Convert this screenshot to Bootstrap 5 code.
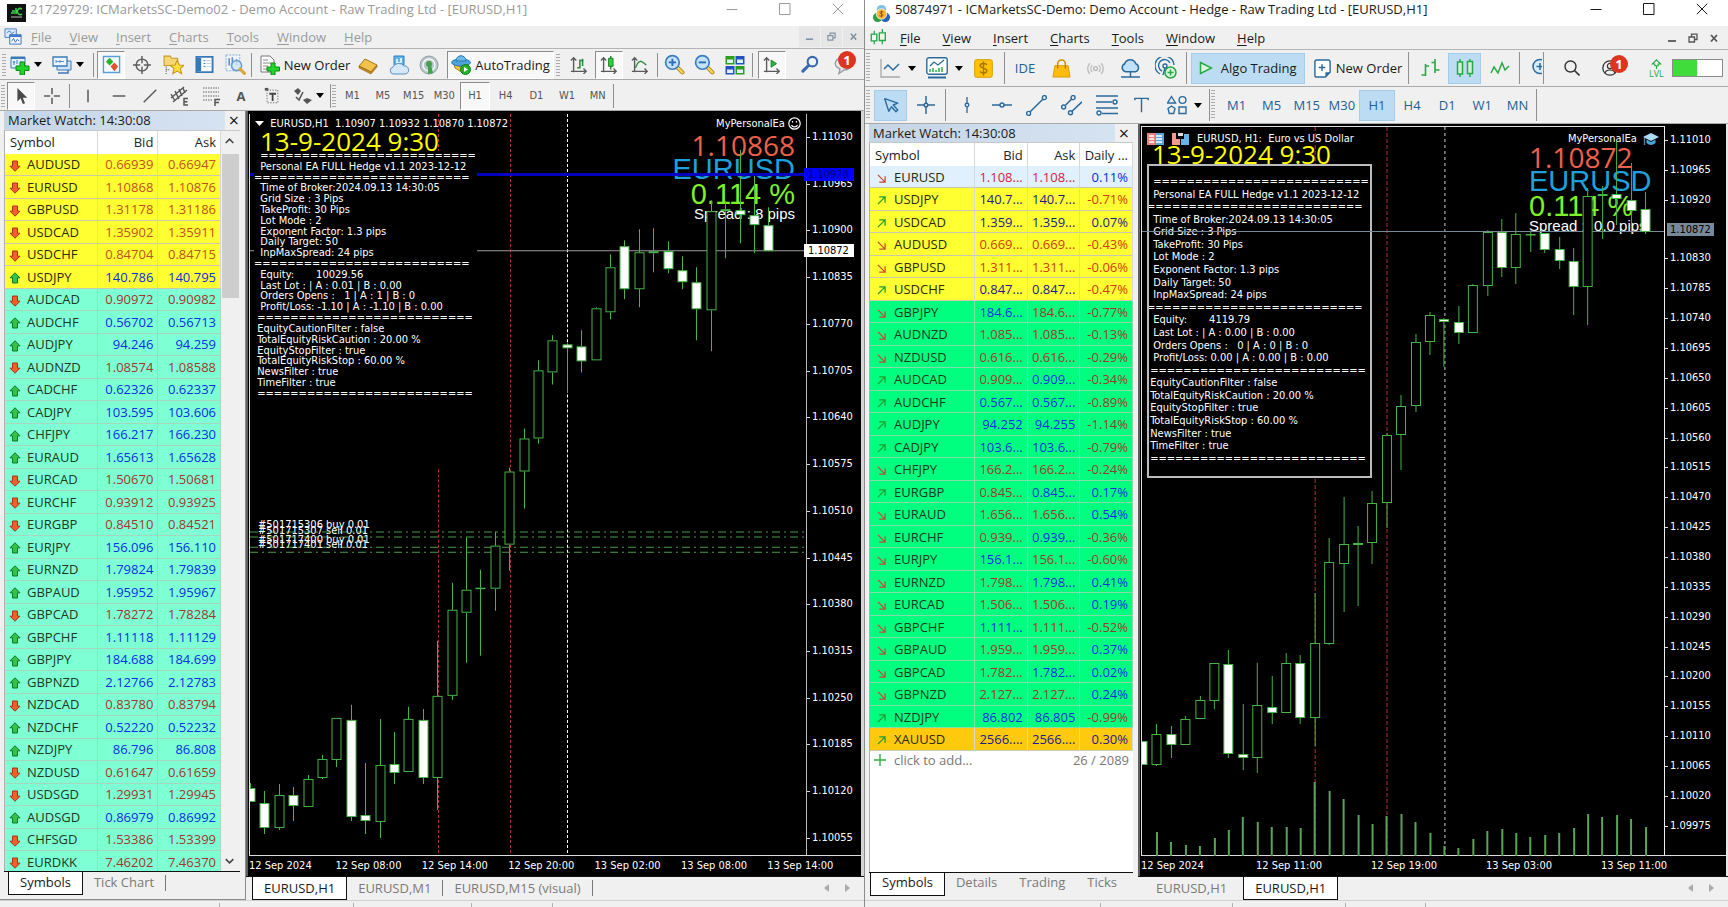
<!DOCTYPE html>
<html lang="en">
<head>
<meta charset="utf-8">
<meta name="viewport" content="width=device-width, initial-scale=1">
<title>EURUSD,H1 - Trading terminals</title>
<link href="https://cdn.jsdelivr.net/npm/bootstrap@5.3.0/dist/css/bootstrap.min.css" rel="stylesheet">
<style>
  :root { --face:#f0f0f0; --edge:#a9a9a9; --ui:"Open Sans","Noto Sans",sans-serif; --chart:"DejaVu Sans Condensed","DejaVu Sans","Noto Sans",sans-serif; }
  html, body { height:100%; }
  body { font-family:var(--ui); font-size:13px; line-height:18px; color:#1a1a1a; background:var(--face); overflow:hidden; }
  .terminal { width:50%; min-width:0; background:var(--face); }
  .terminal.t5 { border-left:1px solid #8c8c8c; }
  .btn { --bs-btn-padding-x:0; --bs-btn-padding-y:0; --bs-btn-font-size:13px; --bs-btn-line-height:18px; --bs-btn-border-radius:0; font-family:var(--ui); color:inherit; }
  svg { display:block; flex:none; }

  /* caption and menu */
  .caption-bar { height:26px; background:#fff; padding-left:7px; }
  .caption-bar .title { line-height:18px; }
  .caption-bar .wbtn { width:53px; height:26px; padding-bottom:8px; }
  .menu-bar { height:23px; border-bottom:1px solid #b4b4b4; }
  .menu-bar a { color:inherit; text-decoration:none; }
  .mdi button { width:21px; height:21px; }
  .t4 .caption-bar, .t4 .menu-bar { color:#9a9a9a; }
  .t4 .menu-bar { padding-left:4px; }
  .t4 .menu-links { gap:18px; margin-left:8px; }
  .t4 .mdi { gap:1px; color:#8494a4; }
  .t4 .mdi button { background:#e6e6e6; }
  .t5 .menu-bar { height:24px; padding-left:5px; }
  .t5 .menu-links { gap:22px; margin-left:13px; }
  .t5 .mdi { color:#555; padding-right:4px; }
  .u { text-decoration:underline; text-underline-offset:2px; }

  /* toolbars */
  .tbar { border-bottom:1px solid var(--edge); }
  .grip { width:4px; align-self:stretch; margin:3px 0; background:repeating-linear-gradient(#999 0 1px, transparent 1px 3px); opacity:.8; }
  .vsep { width:1px; align-self:stretch; margin:2px 0; background:#8f8f8f; }
  .caret { width:0; height:0; border:4px solid transparent; border-top:5px solid #000; border-bottom:0; }
  .t4 .tbar { height:31px; padding-top:2px; }
  .t4 .tool { width:28px; height:28px; }
  .t4 .tool.on, .t4 .wide.on { background:#f8f8f8; border:1px solid; border-color:#8c8c8c #fff #fff #8c8c8c; }
  .t4 .frames { width:276px; font:11px/14px var(--chart); color:#555; }
  .t4 .frames .btn { font:inherit; height:28px; border:1px solid transparent; }
  .t4 .frames .btn.on { background:#f8f8f8; border-color:#8c8c8c #fff #fff #8c8c8c; }
  .t5 .tbar { height:37px; }
  .t5 .tool { width:33px; height:31px; }
  .t5 .on { background:#bcdcf4; border:1px solid #a4cdec; }
  .t5 .frames { width:316px; color:#1c5f94; }
  .t5 .frames .btn { height:31px; }
  .t5 .frames .btn.on { background:#bcdcf4; }
  .clip { width:13px; overflow:hidden; }
  .alert-dot { position:absolute; width:18px; height:18px; border-radius:50%; background:#dc3520; color:#fff; font-weight:700; font-size:13px; line-height:18px; text-align:center; }

  /* market watch */
  .watch { padding:0 5px 0 4px; }
  .t4 .watch { width:246px; border-right:1px solid #8c8c8c; border-bottom:1px solid #8c8c8c; }
  .t5 .watch { width:273px; }
  .watch-head { height:19px; }
  .t5 .watch-head { height:18px; }
  .watch-head .name { background:linear-gradient(90deg,#c5d5e6,#d6e3f1); padding-left:4px; }
  .t4 .watch { padding-right:2px; }
  .t4 .watch-body, .t4 .watch .tabs-row { margin-right:3px; }
  .watch-head .close-x { width:18px; font-size:18px; line-height:16px; }
  .watch-body { background:#fff; border-left:1px solid #b0b0b0; border-top:1px solid #c8c8c8; min-height:0; }
  .quotes { --bs-table-bg:transparent; table-layout:fixed; margin:0; font-size:13px; line-height:18px; border-collapse:separate; border-spacing:0; }
  .quotes th, .quotes td { padding:0 4px 0 0; border:0; border-right:1px solid #d8d8d8; white-space:nowrap; overflow:hidden; text-align:right; font-weight:400; vertical-align:middle; color:inherit; background:inherit; box-shadow:none; }
  .quotes thead tr { height:23px; background:#fff; }
  .quotes tbody tr { height:22px; }
  .quotes tbody tr:nth-child(even) { height:23px; }
  .quotes tbody td, .quotes tbody th { border-bottom:1px solid #c9c9b0; }
  .quotes .sym { text-align:left; padding-left:4px; color:#1c3a1c; }
  .quotes thead .sym { color:#1a1a1a; padding-left:5px; }
  .quotes .y { background:#ffff32; } .quotes .a { background:#7fffd4; } .quotes .g { background:#00ff7f; } .quotes .s { background:#e0f0fc; } .quotes .o { background:#ffc90e; }
  .quotes .a td, .quotes .a th { border-color:#a6d8c0; } .quotes .g td, .quotes .g th { border-color:#86dca8; }
  .quotes .y .sym, .quotes .s .sym, .quotes .o .sym { color:#2a2a10; }
  .quotes .up { color:#0a2ee0; } .quotes .dn { color:#a0382a; }
  .quotes .y .up, .quotes .o .up { color:#1a1a8a; } .quotes .y .dn { color:#d03a10; } .quotes .s .dn { color:#d81e3c; }
  .t4 .quotes .y .up { color:#0a2ee0; } .t4 .quotes .y .dn { color:#c0501e; }
  .quote-icon { display:inline-block; vertical-align:middle; margin-right:6px; }
  .t5 .quote-icon { margin:0 8px 0 3px; }
  .t4 .scroller { width:19px; background:#f0f0f0; }
  .scroller .thumb { height:144px; background:#cdcdcd; margin:0 1px; }
  .tabs-row { height:24px; color:#7a7a7a; }
  .tabs-row a { color:inherit; text-decoration:none; display:block; height:23px; line-height:20px; padding:0 11px; }
  .tabs-row a.on { background:#fff; color:#1a1a1a; border:1px solid #111; border-top:0; }
  .watch .tabs-row { border-top:1px solid #111; height:28px; }
  .t5 .watch .tabs-row { padding-left:1px; }
  .t5 .watch .tabs-row a { line-height:18px; }
  .tick-sep { width:1px; height:16px; background:#777; margin-top:3px; }

  /* chart window */
  .chart-box { background:#000; color:#fff; font:11px/14px var(--chart); min-height:0; }
  .t4 .chart-box { border-left:2px solid #606060; border-right:3px solid #d4d4d4; padding:3px 0 0 1px; }
  .t5 .chart-box { border-left:2px solid #606060; border-right:2px solid #e8e8e8; padding:2px 0 0 1px; }
  .plot { min-width:0; }
  .plot svg.bars { width:100%; height:100%; position:absolute; left:0; top:0; overflow:hidden; }
  .t4 .axis { width:55px; padding:16px 0 11px 5px; border-left:1px solid #bbb; }
  .t5 .axis { width:62px; padding:7px 0 23px 5px; border-left:1px solid #eee; }
  .axis span { position:relative; }
  .axis span::before { content:""; position:absolute; left:-5px; top:7px; width:3px; height:1px; background:#ddd; }
  .axis .now { background:#778899; color:#000; margin-left:-3px; padding-left:3px; margin-right:12px; line-height:13px; }
  .axis .now::before { display:none; }
  .tag-price { position:absolute; right:7px; width:50px; height:13px; line-height:13px; padding-left:4px; }
  .times { height:21px; padding-top:3px; margin-top:-1px; position:relative; border-top:1px solid #ddd; }
  .times span { white-space:nowrap; flex:none; }
  .over { position:absolute; white-space:pre; }
  .stamp { font:26px/26px "Open Sans","Noto Sans",sans-serif; color:#ff0; }
  .hud { display:flex; flex-direction:column; font-family:"Liberation Sans",Arial,sans-serif; }
  .hud .px { font:28px/24px "Open Sans","Noto Sans",sans-serif; color:#f0614a; }
  .hud .pair { font-size:29px; line-height:24px; color:#1ea0dc; }
  .hud .pct { font-size:29px; line-height:27px; color:#7ff028; }
  .hud .spr { font-size:15px; line-height:12px; }
  .ea { z-index:2; background:#000; line-height:10px; }
  .chart-tabs { height:24px; border-top:1px solid #111; padding-left:2px; }
  .chart-tabs a { line-height:23px; }
  .statusbar { height:7px; border-top:1px solid #d0d0d0; padding-top:2px; }
  .statusbar i { border-right:1px solid #b0b0b0; }
  .battery { width:51px; height:18px; border:1px solid #8a8a8a; background:#fff; }
  .battery div { width:24px; height:100%; background:#3fdc3c; }
</style>
</head>
<body>
<svg width="0" height="0" class="position-absolute" aria-hidden="true">
  <defs>
    <symbol id="i-min" viewBox="0 0 12 12"><path d="M.5 6.5h11" stroke="currentColor" fill="none"/></symbol>
    <symbol id="i-max" viewBox="0 0 12 12"><path d="M.5.5h10.5v11H.5z" stroke="currentColor" fill="none"/></symbol>
    <symbol id="i-x" viewBox="0 0 12 12"><path d="M.8.8l10.400 10.400M11.200.8L.8 11.200" stroke="currentColor" fill="none"/></symbol>
    <symbol id="i-mmin" viewBox="0 0 10 10"><path d="M1 8h8" stroke="currentColor" stroke-width="1.800"/></symbol>
    <symbol id="i-mres" viewBox="0 0 10 10"><path d="M1 4h5.500v5H1zM3.500 4V1.200h5.500v5.300H6.500" stroke="currentColor" stroke-width="1.300" fill="none"/></symbol>
    <symbol id="i-mx" viewBox="0 0 10 10"><path d="M2 2l6 6.500M8 2L2 8.500" stroke="currentColor" stroke-width="1.800"/></symbol>
    <symbol id="i-winicon" viewBox="0 0 20 20"><path d="M1 2h12v9H1z" fill="#dceafb" stroke="#4a7fc8"/><path d="M3 6l3-2 2 3 3-2" stroke="#4a7fc8" fill="none"/><path d="M6 8h12v10H6z" fill="#eef5ff" stroke="#3f74c0"/><path d="M6 9.500h12" stroke="#3f74c0" stroke-width="2"/><path d="M8 15l2-3 2 4 2-3 2 2" stroke="#3f74c0" fill="none"/></symbol>
    <symbol id="i-newchart" viewBox="0 0 20 20"><path d="M1 2h14v11H1z" fill="#e3f0fb" stroke="#3c7ab4"/><path d="M1 3h14" stroke="#3c7ab4" stroke-width="2"/><path d="M4 6v4M3 7h2M7 5v4M11 6v3" stroke="#3c7ab4"/><path d="M10 7h4.500v4H19v4.500h-4.500V20H10v-4.500H6V11h4z" fill="#22d42a" stroke="#0c8a14"/></symbol>
    <symbol id="i-profiles" viewBox="0 0 20 20"><path d="M5 6h14v9H5z" fill="#cfe4f7" stroke="#3c7ab4"/><path d="M6 18h10v-3" fill="none" stroke="#3c7ab4" stroke-width="1.500"/><path d="M1 2h14v9H1z" fill="#eef6fd" stroke="#3c7ab4" stroke-width="1.300"/><path d="M4 6.500h8M4 5v3M8 5v3" stroke="#5a93c8"/></symbol>
    <symbol id="i-mw" viewBox="0 0 20 20"><path d="M1.500 1.500h17v17h-17z" fill="#f6fbff" stroke="#5b9fd8" stroke-width="1.500"/><path d="M4 7l4-4 4 4-4 4z" fill="#2bb52b"/><path d="M9 12l4-4 4 4-4 5z" fill="#e2502c"/></symbol>
    <symbol id="i-target" viewBox="0 0 20 20"><circle cx="10" cy="10" r="6.500" fill="none" stroke="#5c5c5c" stroke-width="1.600"/><path d="M10 0v8M10 12v8M0 10h8M12 10h8" stroke="#5c5c5c" stroke-width="1.600"/></symbol>
    <symbol id="i-fav" viewBox="0 0 20 20"><path d="M1 2h6l1 2h6v7H1z" fill="#f7d774" stroke="#c79a24"/><path d="M3 12v7M3 15h4" stroke="#555" stroke-dasharray="1 1"/><path d="M13.500 6l2 4.500 4.500.3-3.500 3 1.200 5-4.200-2.600-4.200 2.600 1.200-5-3.500-3 4.500-.3z" fill="#ffdf3a" stroke="#c4941c"/></symbol>
    <symbol id="i-nav" viewBox="0 0 20 20"><path d="M1.500 2h17v16h-17z" fill="#fff" stroke="#3878b8" stroke-width="2"/><path d="M2 3h4.500v14H2z" fill="#3878b8"/><path d="M9 6h2M9 9h2M9 12h2" stroke="#3878b8"/><path d="M12 6h5M12 9h5M12 12h5" stroke="#b8cbe0"/></symbol>
    <symbol id="i-tester" viewBox="0 0 20 20"><path d="M1 1h13v15H1z" fill="#eef5fc" stroke="#8fb0d4" stroke-dasharray="2 1"/><path d="M4 4v7M7 3v8M11 5v6" stroke="#5b8fc8" stroke-width="1.500"/><circle cx="11" cy="11" r="4.800" fill="#cfe6fa" fill-opacity=".8" stroke="#6a9ccc" stroke-width="1.500"/><path d="M14.500 14.500l4 4" stroke="#d8a83a" stroke-width="3" stroke-linecap="round"/></symbol>
    <symbol id="i-order" viewBox="0 0 20 20"><path d="M1 1h9l4 4v12H1z" fill="#fff" stroke="#777"/><path d="M3 5h5M3 8h8M3 11h5M3 14h4" stroke="#888"/><path d="M11 8h4v4h4.500v4H15v4h-4v-4H7v-4h4z" fill="#22d42a" stroke="#0c8a14"/></symbol>
    <symbol id="i-book" viewBox="0 0 20 20"><path d="M1 11L7 4l12 6-6 7z" fill="#f1c34c" stroke="#a87416"/><path d="M1 11l12 6 6-7v2l-6 7-12-6z" fill="#c48b22" stroke="#94640f" stroke-width=".6"/></symbol>
    <symbol id="i-vps" viewBox="0 0 20 20"><path d="M5 1h10v9H5z" fill="#5fb4ec" stroke="#2c7fc0"/><path d="M8 4v4h3M12 3v5" stroke="#fff" stroke-width="1.500" fill="none"/><path d="M4 19a3.600 3.600 0 010-7 6 5 0 0111-1 4 4 0 011 8z" fill="#d4e8f8" stroke="#5d8fc0"/></symbol>
    <symbol id="i-signal" viewBox="0 0 20 20"><circle cx="10" cy="10" r="9" fill="#b9c6c9" stroke="#8fa0a6"/><circle cx="10" cy="10" r="6" fill="none" stroke="#f4f8f8" stroke-width="1.500"/><circle cx="10" cy="9" r="3" fill="#46a04e"/><path d="M9 10h3l2 8-5 1z" fill="#3fa44a"/></symbol>
    <symbol id="i-auto" viewBox="0 0 20 20"><path d="M3 9l7 3 7-3-5 9-8-5z" fill="#f3c53e" stroke="#b48314"/><ellipse cx="10" cy="7.500" rx="9.500" ry="3.500" fill="#4da4dc" stroke="#2a78b0"/><path d="M5 6c0-7 10-7 10 0z" fill="#6dbbe8" stroke="#2a78b0"/><circle cx="14.500" cy="14.500" r="5" fill="#22b22a" stroke="#0d7f16"/><path d="M13 12l4 2.500-4 2.500z" fill="#fff"/></symbol>
    <symbol id="i-bars" viewBox="0 0 20 20"><path d="M4 2v16M1 5l3-3 3 3M1 17h17M15 14l3 3-3 3" fill="none" stroke="#5a5a5a" stroke-width="1.500"/><path d="M11 4v10M11 5h4M8 13h3M14 3v8" stroke="#2b8a3a" stroke-width="1.700"/></symbol>
    <symbol id="i-candle" viewBox="0 0 20 20"><path d="M4 2v16M1 5l3-3 3 3M1 17h17M15 14l3 3-3 3" fill="none" stroke="#5a5a5a" stroke-width="1.500"/><path d="M12 0v15" stroke="#1a7a26" stroke-width="1.500"/><path d="M9.500 2.500h5v9h-5z" fill="#2fd03c" stroke="#1a7a26"/></symbol>
    <symbol id="i-line" viewBox="0 0 20 20"><path d="M4 2v16M1 5l3-3 3 3M1 17h17M15 14l3 3-3 3" fill="none" stroke="#5a5a5a" stroke-width="1.500"/><path d="M5 13c4-10 6-8 12-3" fill="none" stroke="#2b8a3a" stroke-width="1.500"/></symbol>
    <symbol id="i-zin" viewBox="0 0 20 20"><path d="M12.500 12.500l5 5" stroke="#a87a1c" stroke-width="4" stroke-linecap="round"/><path d="M12.500 12.500l5 5" stroke="#f4d25a" stroke-width="2.500" stroke-linecap="round"/><circle cx="8" cy="8" r="6.500" fill="#c4e2fa" stroke="#3a7cc0" stroke-width="1.600"/><path d="M4.500 8h7M8 4.500v7" stroke="#2a6cb4" stroke-width="1.800"/></symbol>
    <symbol id="i-zout" viewBox="0 0 20 20"><path d="M12.500 12.500l5 5" stroke="#a87a1c" stroke-width="4" stroke-linecap="round"/><path d="M12.500 12.500l5 5" stroke="#f4d25a" stroke-width="2.500" stroke-linecap="round"/><circle cx="8" cy="8" r="6.500" fill="#c4e2fa" stroke="#3a7cc0" stroke-width="1.600"/><path d="M4.500 8h7" stroke="#2a6cb4" stroke-width="1.800"/></symbol>
    <symbol id="i-tile" viewBox="0 0 20 20"><path d="M.5 1h9v8.500h-9zM10.500 11h9v8.500h-9z" fill="#2f9e1e"/><path d="M10.500 1h9v8.500h-9zM.5 11h9v8.500h-9z" fill="#2450c0"/><path d="M2 4.500h6V8H2zM12 4.500h6V8h-6zM2 14.500h6V18H2zM12 14.500h6V18h-6z" fill="#dff0ff"/></symbol>
    <symbol id="i-scroll" viewBox="0 0 20 20"><path d="M4 2v16M1 5l3-3 3 3M1 17h17M15 14l3 3-3 3" fill="none" stroke="#5a5a5a" stroke-width="1.500"/><path d="M9 4.500l6 4-6 4z" fill="#2bb53a" stroke="#1a7a26"/></symbol>
    <symbol id="i-find" viewBox="0 0 20 20"><circle cx="12" cy="7" r="5" fill="#eef4fc" stroke="#3b66ac" stroke-width="2.200"/><path d="M8 11l-6 6" stroke="#3b66ac" stroke-width="3.200" stroke-linecap="round"/></symbol>
    <symbol id="i-chat" viewBox="0 0 20 20"><path d="M10 3c11 0 11 12 1 12l-5 3.500 1-4.500C0 11 1 3 10 3z" fill="#e9e9ee" stroke="#9a9aa6" stroke-width="1.400"/></symbol>
    <symbol id="i-cursor" viewBox="0 0 20 20"><path d="M6 1v15l3.600-3.600L12 19l2.500-1-2.500-6h5z" fill="#4a4a4a"/></symbol>
    <symbol id="i-cross" viewBox="0 0 20 20"><path d="M10 1v7M10 12v7M1 10h7M12 10h7" stroke="#5c5c5c" stroke-width="1.700"/></symbol>
    <symbol id="i-vl" viewBox="0 0 20 20"><path d="M10 3v14" stroke="#5c5c5c" stroke-width="1.700"/></symbol>
    <symbol id="i-hl" viewBox="0 0 20 20"><path d="M3 10h14" stroke="#5c5c5c" stroke-width="1.700"/></symbol>
    <symbol id="i-tl" viewBox="0 0 20 20"><path d="M3 17L17 3" stroke="#5c5c5c" stroke-width="1.700"/></symbol>
    <symbol id="i-chan" viewBox="0 0 20 20"><path d="M1 12L14 1M3 16L17 4M1 8l4 7M5 5l4 8M9 3l3 7M13 2l2 5" stroke="#555" stroke-width="1.400"/><path d="M18 12.500h-4v6.500h4M14 15.700h3.500" fill="none" stroke="#555" stroke-width="1.500"/></symbol>
    <symbol id="i-fib" viewBox="0 0 20 20"><path d="M2 2h16M2 6h16M2 10h16M2 14h9" stroke="#666" stroke-dasharray="1.500 1"/><path d="M14 20v-6.500h5M14 16.500h4" fill="none" stroke="#555" stroke-width="1.500"/></symbol>
    <symbol id="i-txt" viewBox="0 0 20 20"><path d="M4.500 3.500h12v14h-12z" fill="none" stroke="#666" stroke-dasharray="1.500 1.500"/><path d="M2 1h4v3H2z" fill="#555"/><path d="M7 7.500h7.500M10.700 7.500v8" stroke="#444" stroke-width="2"/></symbol>
    <symbol id="i-shp" viewBox="0 0 20 20"><path d="M2 5l4-3 3 3-3 4z" fill="#555"/><path d="M4 11l3 3 4-8" fill="none" stroke="#555" stroke-width="1.600"/><path d="M11 14l4-2 5 2-5 4z" fill="#555"/></symbol>

    <symbol id="j-app" viewBox="0 0 20 20"><circle cx="6" cy="14" r="5" fill="#2f9e44"/><circle cx="14" cy="14" r="5" fill="#2a62b8"/><circle cx="10" cy="6" r="5" fill="#7cc0e8"/><circle cx="10" cy="10.500" r="5.500" fill="#f7b531" stroke="#fff" stroke-width=".8"/><path d="M12 8.500c-3-2-5 1.200-2 2s1 3.500-2.200 1.800M10 7v7" stroke="#9a4a10" fill="none"/></symbol>
    <symbol id="j-win" viewBox="0 0 20 20"><path d="M5 2v16M14.500 0v18" stroke="#22a84a" stroke-width="1.500"/><path d="M1.500 6h6.500v8H1.500zM11 4.500h7v9h-7z" fill="#e9f9ec" stroke="#22a84a" stroke-width="1.600"/></symbol>
    <symbol id="j-chart" viewBox="0 0 20 20"><path d="M1 1v18h19" fill="none" stroke="#a8a8a8" stroke-width="1.300"/><path d="M4 11l4-4 5 5 6-6" fill="none" stroke="#2a6a9c" stroke-width="1.500"/></symbol>
    <symbol id="j-tmpl" viewBox="0 0 22 22"><rect x=".8" y=".8" width="20.400" height="16.400" rx="2" fill="#fff" stroke="#2a6a9c" stroke-width="1.400"/><path d="M4 9l4-4 4 3 6-5" fill="none" stroke="#2a6a9c" stroke-width="1.300"/><path d="M4 15v-3M7 15v-4M10 15v-2M13 15v-4M16 15v-5" stroke="#27ae49" stroke-width="1.500"/><path d="M2 20.500h18" stroke="#2a6a9c" stroke-width="2"/></symbol>
    <symbol id="j-dollar" viewBox="0 0 20 20"><rect x=".7" y=".7" width="18.600" height="18.600" rx="2" fill="#ffc107" stroke="#d89c00"/><path d="M13.500 6c-2-2-7-1.600-7 1.200s7 2 7 5-5 3.400-7.200 1M10 2.500v15" fill="none" stroke="#a87400" stroke-width="1.500"/></symbol>
    <symbol id="j-bag" viewBox="0 0 20 20"><path d="M6 8V5a4 4 0 018 0v3" fill="none" stroke="#c98f00" stroke-width="1.600"/><path d="M3 7h14l2 12H1z" fill="#ffbb0e" stroke="#d89c00"/><path d="M6 7v3M14 7v3" stroke="#8a6200"/></symbol>
    <symbol id="j-radio" viewBox="0 0 22 20"><circle cx="11" cy="10" r="2" fill="none" stroke="#b8b8b8" stroke-width="1.400"/><path d="M7.500 6.500a5 5 0 000 7M14.500 6.500a5 5 0 010 7M5 4.500a8 8 0 000 11M17 4.500a8 8 0 010 11" fill="none" stroke="#b8b8b8" stroke-width="1.300"/></symbol>
    <symbol id="j-cloud" viewBox="0 0 20 20"><path d="M5 13a4 4 0 01-.5-7.500 5.500 5.500 0 0110.500 0A4 4 0 0115 13z" fill="#bfe2fa" stroke="#2a6a9c" stroke-width="1.400"/><path d="M10 13v5M1 18h18" stroke="#2a6a9c" stroke-width="1.400"/></symbol>
    <symbol id="j-radar" viewBox="0 0 22 22"><circle cx="10" cy="9" r="2" fill="none" stroke="#2a6a9c" stroke-width="1.400"/><path d="M7 14a6 6 0 118-8M5 17A9.500 9.500 0 1119 8M8 18l2-7" fill="none" stroke="#2a6a9c" stroke-width="1.400"/><circle cx="15.500" cy="15.500" r="5.500" fill="#d8f6dc" stroke="#27a844" stroke-width="1.500"/><path d="M15.500 12.500v6M12.500 15.500h6" stroke="#27a844" stroke-width="1.500"/></symbol>
    <symbol id="j-play" viewBox="0 0 14 14"><path d="M1.500 1.500l11 5.500-11 5.500z" fill="#d8f6dc" stroke="#27a844" stroke-width="1.500"/></symbol>
    <symbol id="j-order" viewBox="0 0 18 20"><path d="M3 1h12a2 2 0 012 2v11l-5 5H3a2 2 0 01-2-2V3a2 2 0 012-2z" fill="#fff" stroke="#2a6a9c" stroke-width="1.500"/><path d="M12 19v-5h5z" fill="#2a6a9c"/><path d="M8.500 5.500v7M5 9h7" stroke="#2a6a9c" stroke-width="1.500"/></symbol>
    <symbol id="j-bars" viewBox="0 0 20 20"><path d="M5.500 6v12M5.500 8h3.500M1.500 17h4M15 1v14M15 12h4.500M11.500 4.500H15" stroke="#27a844" stroke-width="1.600"/></symbol>
    <symbol id="j-candle" viewBox="0 0 20 20"><path d="M5 1v18M15 1v18" stroke="#27a844" stroke-width="1.400"/><path d="M2.500 4h5v12h-5zM12.500 3.500h5v12h-5z" fill="#d2f2d8" stroke="#27a844" stroke-width="1.500"/></symbol>
    <symbol id="j-line" viewBox="0 0 20 20"><path d="M1 15l3-6 4 6 4-10 3 7 4-4" fill="none" stroke="#27a844" stroke-width="1.500"/></symbol>
    <symbol id="j-zoom" viewBox="0 0 20 20"><circle cx="9" cy="8.500" r="7" fill="#d7ecfb" stroke="#2a6a9c" stroke-width="1.500"/><path d="M9 5v7M5.500 8.500h7M14 14l5 5" stroke="#2a6a9c" stroke-width="1.500"/></symbol>
    <symbol id="j-find" viewBox="0 0 16 16"><circle cx="6.500" cy="6.500" r="5.500" fill="none" stroke="#333" stroke-width="1.400"/><path d="M10.500 10.500l5 5" stroke="#333" stroke-width="1.600"/></symbol>
    <symbol id="j-user" viewBox="0 0 16 16"><circle cx="8" cy="8" r="7.200" fill="none" stroke="#333" stroke-width="1.300"/><circle cx="8" cy="6" r="2.600" fill="none" stroke="#333" stroke-width="1.200"/><path d="M3 13c1-4 9-4 10 0" fill="none" stroke="#333" stroke-width="1.200"/></symbol>
    <symbol id="j-up" viewBox="0 0 12 12"><path d="M6 1l5 5H8v2H4V6H1zM6 8v4" fill="none" stroke="#27a844" stroke-width="1.300"/></symbol>
    <symbol id="j-cursor" viewBox="0 0 20 20"><path d="M3 3l4.500 14 3-5 5 5.500 2-2-5-5.500 5-2z" fill="none" stroke="#2a6a9c" stroke-width="1.500" stroke-linejoin="round"/></symbol>
    <symbol id="j-cross" viewBox="0 0 20 20"><circle cx="10" cy="10" r="1.800" fill="none" stroke="#2a6a9c" stroke-width="1.500"/><path d="M10 1v7M10 12v7M1 10h7M12 10h7" stroke="#2a6a9c" stroke-width="1.500"/></symbol>
    <symbol id="j-vl" viewBox="0 0 20 20"><circle cx="10" cy="10" r="2" fill="none" stroke="#2a6a9c" stroke-width="1.500"/><path d="M10 1v7M10 12v7" stroke="#2a6a9c" stroke-width="1.500"/></symbol>
    <symbol id="j-hl" viewBox="0 0 20 20"><circle cx="10" cy="10" r="2" fill="none" stroke="#2a6a9c" stroke-width="1.500"/><path d="M0 10h8M12 10h8" stroke="#2a6a9c" stroke-width="1.500"/></symbol>
    <symbol id="j-tl" viewBox="0 0 20 20"><circle cx="2.500" cy="17.500" r="1.900" fill="none" stroke="#2a6a9c" stroke-width="1.400"/><circle cx="17.500" cy="2.500" r="1.900" fill="none" stroke="#2a6a9c" stroke-width="1.400"/><path d="M4 16L16 4" stroke="#2a6a9c" stroke-width="1.500"/></symbol>
    <symbol id="j-chan" viewBox="0 0 20 20"><circle cx="2.500" cy="11.500" r="1.900" fill="none" stroke="#2a6a9c" stroke-width="1.400"/><circle cx="11.500" cy="2.500" r="1.900" fill="none" stroke="#2a6a9c" stroke-width="1.400"/><circle cx="9" cy="17" r="1.900" fill="none" stroke="#2a6a9c" stroke-width="1.400"/><path d="M4 10l6-6M10.500 15.500L20 6.500" stroke="#2a6a9c" stroke-width="1.500"/></symbol>
    <symbol id="j-fib" viewBox="0 0 22 20"><path d="M0 1h22M0 7h16M0 13h22M6 18.500h16" stroke="#2a6a9c" stroke-width="1.500"/><circle cx="19" cy="7" r="2" fill="none" stroke="#2a6a9c" stroke-width="1.400"/><circle cx="3" cy="18" r="2" fill="none" stroke="#2a6a9c" stroke-width="1.400"/></symbol>
    <symbol id="j-txt" viewBox="0 0 20 20"><path d="M3 4.500V2.500h14v2M10 2.500V17" fill="none" stroke="#2a6a9c" stroke-width="1.500"/></symbol>
    <symbol id="j-shp" viewBox="0 0 20 20"><path d="M4.500 1.500l4 6.500h-8zM1 13.500l3.500-2.500 3.500 2.500-1.300 5H2.300zM12 12h7v6.500h-7z" fill="none" stroke="#2a6a9c" stroke-width="1.400"/><circle cx="15.500" cy="5" r="3.400" fill="none" stroke="#2a6a9c" stroke-width="1.400"/></symbol>

    <symbol id="q-up" viewBox="0 0 12 12"><path d="M6 .8l5 5H8.500V11h-5V5.800H1z" fill="#35c24a" stroke="#0c7a22"/></symbol>
    <symbol id="q-dn" viewBox="0 0 12 12"><path d="M6 11.200l-5-5h2.500V1h5v5.200H11z" fill="#f0602c" stroke="#b03010"/></symbol>
    <symbol id="r-up" viewBox="0 0 10 10"><path d="M1 9l7.500-7.500M2.500 1H9v6.500" fill="none" stroke="#1f9e2e" stroke-width="1.400"/></symbol>
    <symbol id="r-dn" viewBox="0 0 10 10"><path d="M1 1l7.500 7.500M2.500 9H9V2.500" fill="none" stroke="#c84a32" stroke-width="1.400"/></symbol>
  </defs>
</svg>

<div class="d-flex h-100">
  <!-- MetaTrader 4 window -->
  <section class="terminal t4 d-flex flex-column h-100">
    <header class="caption-bar d-flex align-items-center">
      <svg width="19" height="18" viewBox="0 0 19 18"><path d="M0 0h19v18H0z" fill="#111"/><path d="M4 9h4M5 7h3M9 4v6M15 5a3 3 0 100 5" stroke="#3ccf4e" fill="none" stroke-width="1.500"/><path d="M4 13h11" stroke="#bbb"/></svg>
      <span class="title ms-1 pb-2 text-nowrap flex-fill">21729729: ICMarketsSC-Demo02 - Demo Account - Raw Trading Ltd - [EURUSD,H1]</span>
      <button class="btn wbtn d-flex justify-content-center align-items-center" aria-label="Minimize"><svg width="12" height="12"><use href="#i-min"/></svg></button>
      <button class="btn wbtn d-flex justify-content-center align-items-center" aria-label="Maximize"><svg width="12" height="12"><use href="#i-max"/></svg></button>
      <button class="btn wbtn d-flex justify-content-center align-items-center" aria-label="Close"><svg width="12" height="12"><use href="#i-x"/></svg></button>
    </header>
    <nav class="menu-bar d-flex align-items-center">
      <svg width="19" height="19"><use href="#i-winicon"/></svg>
      <div class="menu-links d-flex flex-fill">
        <a href="#"><span class="u">F</span>ile</a><a href="#"><span class="u">V</span>iew</a><a href="#"><span class="u">I</span>nsert</a><a href="#"><span class="u">C</span>harts</a><a href="#"><span class="u">T</span>ools</a><a href="#"><span class="u">W</span>indow</a><a href="#"><span class="u">H</span>elp</a>
      </div>
      <div class="mdi d-flex">
        <button class="btn d-flex justify-content-center align-items-center" aria-label="Minimize chart"><svg width="9" height="9"><use href="#i-mmin"/></svg></button>
        <button class="btn d-flex justify-content-center align-items-center" aria-label="Restore chart"><svg width="9" height="9"><use href="#i-mres"/></svg></button>
        <button class="btn d-flex justify-content-center align-items-center" aria-label="Close chart"><svg width="9" height="9"><use href="#i-mx"/></svg></button>
      </div>
    </nav>
    <div class="tbar d-flex align-items-center" id="t4a"></div>
    <div class="tbar d-flex align-items-center" id="t4b"></div>
    <div class="d-flex flex-fill" style="min-height:0">
      <aside class="watch d-flex flex-column">
        <div class="watch-head d-flex"><span class="name flex-fill">Market Watch: 14:30:08</span><button class="btn close-x" aria-label="Close Market Watch">×</button></div>
        <div class="watch-body d-flex flex-fill overflow-hidden">
          <div class="flex-fill overflow-hidden">
            <table class="quotes table w-100"><colgroup><col style="width:43%"><col style="width:28%"><col style="width:29%"></colgroup>
              <thead><tr><th class="sym">Symbol</th><th>Bid</th><th>Ask</th></tr></thead><tbody id="q4"></tbody></table>
          </div>
          <div class="scroller d-flex flex-column align-items-stretch">
            <svg width="19" height="23" viewBox="0 0 20 23"><path d="M5 12l4-4 4 4" fill="none" stroke="#444" stroke-width="1.600"/></svg>
            <div class="thumb"></div>
            <svg class="mt-auto" width="19" height="20" viewBox="0 0 20 20"><path d="M5 8l4 4 4-4" fill="none" stroke="#444" stroke-width="1.600"/></svg>
          </div>
        </div>
        <div class="tabs-row d-flex"><a class="on ms-1" href="#">Symbols</a><a href="#">Tick Chart</a><span class="tick-sep"></span></div>
      </aside>
      <main class="d-flex flex-column flex-fill" style="min-width:0">
        <div class="chart-box d-flex flex-column flex-fill">
          <div class="d-flex flex-fill position-relative" style="min-height:0">
            <div class="plot flex-fill position-relative border-start">
              <div class="over" style="left:5px;top:3px"><svg class="d-inline-block" width="9" height="6" viewBox="0 0 9 6"><path d="M0 0h9L4.500 5z" fill="#fff"/></svg>  EURUSD,H1  1.10907 1.10932 1.10870 1.10872</div>
              <div class="over stamp" style="left:10px;top:14px">13-9-2024 9:30</div>
              <div class="over text-end hud" style="right:11px;top:19px">
                <div class="px">1.10868</div><div class="pair">EURUSD</div><div class="pct">0.114 %</div><div class="spr">Spread : 8 pips</div>
              </div>
              <div class="over" style="right:5px;top:3px">MyPersonalEa <svg class="d-inline-block align-middle" width="13" height="13" viewBox="0 0 13 13"><circle cx="6.500" cy="6.500" r="5.700" fill="none" stroke="#fff" stroke-width="1.200"/><path d="M4.500 4v1.500M8.500 4v1.500M3.500 8c1 2.500 5 2.500 6 0" fill="none" stroke="#fff" stroke-width="1.200"/></svg></div>
              <svg class="bars" id="c4" viewBox="250 114 556 741" preserveAspectRatio="none"></svg>
              <div class="over ea d-flex flex-column justify-content-between" id="ea4" style="left:4px;top:37px;width:223px;height:318px;padding-bottom:70px"></div>
              <div class="over" style="left:8px;top:404px">#501715306 buy 0.01</div>
              <div class="over" style="left:8px;top:410px">#501715307 sell 0.01</div>
              <div class="over" style="left:8px;top:419px">#501717400 buy 0.01</div>
              <div class="over" style="left:8px;top:424px">#501717401 sell 0.01</div>
            </div>
            <div class="axis d-flex flex-column justify-content-between" id="ax4"></div>
            <div class="tag-price" style="top:54px;background:#00f;color:#000080">1.10978</div>
            <div class="tag-price" style="top:130px;background:#fff;color:#000">1.10872</div>
          </div>
          <div class="times d-flex" id="tm4"></div>
        </div>
        <div class="chart-tabs tabs-row d-flex">
          <a class="on ms-1" href="#">EURUSD,H1</a><a href="#">EURUSD,M1</a><span class="tick-sep"></span><a href="#">EURUSD,M15 (visual)</a><span class="tick-sep"></span>
          <svg class="ms-auto me-2 mt-1" width="34" height="14" viewBox="0 0 34 14"><path d="M7 3v8L2 7zM23 3v8l5-4z" fill="#aaa"/></svg>
        </div>
      </main>
    </div>
    <footer class="statusbar d-flex"><i style="width:220px"></i><i style="width:134px"></i><i style="width:118px"></i><i style="width:81px"></i></footer>
  </section>

  <!-- MetaTrader 5 window -->
  <section class="terminal t5 d-flex flex-column h-100">
    <header class="caption-bar d-flex align-items-center">
      <svg width="19" height="19"><use href="#j-app"/></svg>
      <span class="title ms-1 pb-2 text-nowrap flex-fill">50874971 - ICMarketsSC-Demo: Demo Account - Hedge - Raw Trading Ltd - [EURUSD,H1]</span>
      <button class="btn wbtn d-flex justify-content-center align-items-center" aria-label="Minimize"><svg width="12" height="12"><use href="#i-min"/></svg></button>
      <button class="btn wbtn d-flex justify-content-center align-items-center" aria-label="Maximize"><svg width="12" height="12"><use href="#i-max"/></svg></button>
      <button class="btn wbtn d-flex justify-content-center align-items-center" aria-label="Close"><svg width="12" height="12"><use href="#i-x"/></svg></button>
    </header>
    <nav class="menu-bar d-flex align-items-center">
      <svg width="17" height="17"><use href="#j-win"/></svg>
      <div class="menu-links d-flex flex-fill">
        <a href="#"><span class="u">F</span>ile</a><a href="#"><span class="u">V</span>iew</a><a href="#"><span class="u">I</span>nsert</a><a href="#"><span class="u">C</span>harts</a><a href="#"><span class="u">T</span>ools</a><a href="#"><span class="u">W</span>indow</a><a href="#"><span class="u">H</span>elp</a>
      </div>
      <div class="mdi d-flex">
        <button class="btn d-flex justify-content-center align-items-center" aria-label="Minimize chart"><svg width="10" height="10"><use href="#i-mmin"/></svg></button>
        <button class="btn d-flex justify-content-center align-items-center" aria-label="Restore chart"><svg width="10" height="10"><use href="#i-mres"/></svg></button>
        <button class="btn d-flex justify-content-center align-items-center" aria-label="Close chart"><svg width="10" height="10"><use href="#i-mx"/></svg></button>
      </div>
    </nav>
    <div class="tbar d-flex align-items-center" id="t5a"></div>
    <div class="tbar d-flex align-items-center" id="t5b"></div>
    <div class="d-flex flex-fill" style="min-height:0">
      <aside class="watch d-flex flex-column">
        <div class="watch-head d-flex"><span class="name flex-fill">Market Watch: 14:30:08</span><button class="btn close-x" aria-label="Close Market Watch">×</button></div>
        <div class="watch-body flex-fill overflow-hidden">
          <table class="quotes table w-100"><colgroup><col style="width:40%"><col style="width:20%"><col style="width:20%"><col style="width:20%"></colgroup>
            <thead><tr><th class="sym">Symbol</th><th>Bid</th><th>Ask</th><th>Daily ...</th></tr></thead><tbody id="q5"></tbody></table>
          <div class="d-flex align-items-center px-1" style="color:#777"><svg class="me-2" width="12" height="12" viewBox="0 0 12 12"><path d="M6 0v12M0 6h12" stroke="#2fae3c" stroke-width="1.400"/></svg><span>click to add...</span><span class="ms-auto">26 / 2089</span></div>
        </div>
        <div class="tabs-row d-flex"><a class="on" href="#">Symbols</a><a href="#">Details</a><a href="#">Trading</a><a href="#">Ticks</a></div>
      </aside>
      <main class="d-flex flex-column flex-fill" style="min-width:0">
        <div class="chart-box d-flex flex-column flex-fill">
          <div class="d-flex flex-fill position-relative" style="min-height:0">
            <div class="plot flex-fill position-relative border-start border-top">
              <div class="over d-flex align-items-center gap-2" style="left:5px;top:5px">
                <svg width="17" height="12" viewBox="0 0 17 12"><path d="M0 0h8v12H0z" fill="#e88478"/><path d="M8 0h9v12H8z" fill="#5aa6d8"/><path d="M2 3h5M2 6h5M2 9h5M9 3h6M9 6h6M9 9h6" stroke="#fff" stroke-width="1.500"/></svg>
                <svg width="17" height="12" viewBox="0 0 17 12"><path d="M0 0h4v6h4v6H0z" fill="#f09a90"/><path d="M9 12V6h3V1h5v11z" fill="#6ab4e4"/><path d="M6 0h5v3H6z" fill="#ddd"/></svg>
                <span>EURUSD, H1:  Euro vs US Dollar</span></div>
              <div class="over stamp" style="left:10px;top:14px">13-9-2024 9:30</div>
              <div class="over hud" style="left:387px;top:18px">
                <div class="px">1.10872</div><div class="pair">EURUSD</div><div class="pct">0.114 %</div><div class="spr">Spread :  0.0 pips</div>
              </div>
              <div class="over" style="right:5px;top:5px">MyPersonalEa  <svg class="d-inline-block align-middle" width="16" height="13" viewBox="0 0 16 13"><path d="M8 0l8 4-8 4-8-4z" fill="#a8dcf8"/><path d="M3.500 6.500V10c3 2.500 6 2.500 9 0V6.500L8 9z" fill="#4aa4dc"/><path d="M1.500 5v7" stroke="#4a7a9c" stroke-width="1.500"/></svg></div>
              <div class="over ea d-flex flex-column justify-content-between" id="ea5" style="left:5px;top:37px;width:225px;height:314px;padding:13px 0 14px;outline:2px solid #bbb;outline-offset:-2px"></div>
              <svg class="bars" style="z-index:3" id="c5" viewBox="1141 126 523 729" preserveAspectRatio="none"></svg>
            </div>
            <div class="axis d-flex flex-column justify-content-between" id="ax5"></div>
          </div>
          <div class="times d-flex" id="tm5"></div>
        </div>
        <div class="chart-tabs tabs-row d-flex">
          <a href="#" class="px-3">EURUSD,H1</a><a class="on" href="#">EURUSD,H1</a>
          <svg class="ms-auto me-2 mt-1" width="34" height="14" viewBox="0 0 34 14"><path d="M7 3v8L2 7zM23 3v8l5-4z" fill="#aaa"/></svg>
        </div>
      </main>
    </div>
    <footer class="statusbar d-flex"><i style="width:236px"></i><i style="width:132px"></i><i style="width:113px"></i><i style="width:80px"></i></footer>
  </section>
</div>

<script src="https://cdn.jsdelivr.net/npm/bootstrap@5.3.0/dist/js/bootstrap.bundle.min.js"></script>
<script>
const $ = id => document.getElementById(id);

/* ---- toolbars: g grip, | separator, v caret, number = spacer, [icon,label,size,on] button ---- */
function toolbar(id, items) {
  $(id).innerHTML = items.map(it => {
    if (typeof it === 'number') return `<span class="flex-shrink-0" style="width:${it}px"></span>`;
    if (it === 'g') return '<span class="grip"></span>';
    if (it === '|') return '<span class="vsep"></span>';
    if (it === 'v') return '<span class="caret"></span>';
    if (typeof it === 'string') return it;
    const [icon, label, size = 20, on] = it;
    return `<button class="btn tool d-flex justify-content-center align-items-center flex-shrink-0${on ? ' on' : ''}" aria-label="${label}"><svg width="${size}" height="${size}"><use href="#${icon}"/></svg></button>`;
  }).join('');
}
const wide = (icon, text, w, on, s = 20) => `<button class="btn wide d-flex align-items-center justify-content-center gap-1 flex-shrink-0${on ? ' on' : ''}" style="width:${w}px;height:${on && s === 14 ? 31 : 28}px"><svg width="${s}" height="${s}"><use href="#${icon}"/></svg><span class="text-nowrap">${text}</span></button>`;
const frames = '<div class="frames d-flex flex-shrink-0">' + ['M1','M5','M15','M30','H1','H4','D1','W1','MN'].map(f => `<button class="btn w-100${f === 'H1' ? ' on' : ''}">${f}</button>`).join('') + '</div>';

toolbar('t4a', [2,'g',0,['i-newchart','New chart'],0,'v',6,['i-profiles','Profiles'],0,'v',9,'|',3,['i-mw','Market Watch',19,1],3,['i-target','Data Window',18],3,['i-fav','Navigator',21],3,['i-nav','Terminal',19],3,['i-tester','Strategy Tester',21],2,'|',6,
  wide('i-order','New Order',94),2,['i-book','MetaEditor',20],3,['i-vps','Virtual hosting',20],2,['i-signal','Signals',20],4,wide('i-auto','AutoTrading',107,1),2,'g',5,
  ['i-bars','Bar chart',18],2,['i-candle','Candlesticks',18,1],3,['i-line','Line chart',18],3,'|',2,['i-zin','Zoom in',21],2,['i-zout','Zoom out',21],3,['i-tile','Tile windows',20],3,'|',5,['i-scroll','Auto scroll',18,1],10,['i-find','Search',19],5,
  '<button class="btn tool position-relative d-flex align-items-center justify-content-center flex-shrink-0" aria-label="Messages"><svg width="20" height="20"><use href="#i-chat"/></svg><span class="alert-dot" style="right:0;top:-1px">1</span></button>']);
toolbar('t4b', [1,'g',2,['i-cursor','Cursor',18,1],3,['i-cross','Crosshair',18],3,'|',4,['i-vl','Vertical line',18],3,['i-hl','Horizontal line',18],3,['i-tl','Trendline',18],2,['i-chan','Equidistant channel',20],3,['i-fib','Fibonacci',20],2,
  '<button class="btn tool fw-bold flex-shrink-0" style="color:#555" aria-label="Text">A</button>',3,['i-txt','Text label',18],2,['i-shp','Arrows',20],0,'v',6,'|',1,'g',1,frames,0,'|']);
toolbar('t5a', [1,'g',3,['j-chart','Charts'],2,'v',4,['j-tmpl','Templates',22],2,'v',4,['j-dollar','Symbols',19],4,'|',6,
  '<button class="btn flex-shrink-0" style="width:28px;color:#1c5f94">IDE</button>',6,['j-bag','Market',19],1,['j-radio','Signals',21],2,['j-cloud','Virtual hosting',21],2,['j-radar','Scanner',22],4,'|',4,
  wide('j-play','&nbsp;Algo Trading',114,1,14),6,wide('j-order','New Order',93,0,19),4,'|',4,['j-bars','Bar chart',20],2,['j-candle','Candlesticks',20,1],2,['j-line','Line chart',20],3,'|',10,
  '<button class="btn clip flex-shrink-0" aria-label="Zoom in"><svg width="20" height="20"><use href="#j-zoom"/></svg></button>','|',19,
  '<button class="btn flex-shrink-0" aria-label="Search"><svg width="16" height="16"><use href="#j-find"/></svg></button>',20,
  '<button class="btn position-relative flex-shrink-0" aria-label="Account"><svg width="16" height="16"><use href="#j-user"/></svg><span class="alert-dot" style="left:8px;top:-5px">1</span></button>',30,
  '<div class="d-flex flex-column align-items-center" style="color:#27a844;font-size:9px;line-height:9px"><svg width="11" height="10"><use href="#j-up"/></svg>LVL</div>',8,'<div class="battery flex-shrink-0"><div></div></div>']);
toolbar('t5b', [1,'g',4,['j-cursor','Cursor',18,1],2,['j-cross','Crosshair',20],3,'|',4,['j-vl','Vertical line',18],2,['j-hl','Horizontal line',20],2,['j-tl','Trendline',21],2,['j-chan','Equidistant channel',21],2,['j-fib','Fibonacci',22],2,['j-txt','Text',19],2,['j-shp','Shapes',20],1,'v',7,'|',1,'g',4,frames,1,'|']);

/* ---- quotes ---- */
const q4 = `AUDUSD 0.66939 0.66947 d|EURUSD 1.10868 1.10876 d|GBPUSD 1.31178 1.31186 d|USDCAD 1.35902 1.35911 d|USDCHF 0.84704 0.84715 d|USDJPY 140.786 140.795 u|AUDCAD 0.90972 0.90982 d|AUDCHF 0.56702 0.56713 u|AUDJPY 94.246 94.259 u|AUDNZD 1.08574 1.08588 d|CADCHF 0.62326 0.62337 u|CADJPY 103.595 103.606 u|CHFJPY 166.217 166.230 u|EURAUD 1.65613 1.65628 u|EURCAD 1.50670 1.50681 d|EURCHF 0.93912 0.93925 d|EURGBP 0.84510 0.84521 d|EURJPY 156.096 156.110 u|EURNZD 1.79824 1.79839 u|GBPAUD 1.95952 1.95967 u|GBPCAD 1.78272 1.78284 d|GBPCHF 1.11118 1.11129 u|GBPJPY 184.688 184.699 u|GBPNZD 2.12766 2.12783 u|NZDCAD 0.83780 0.83794 d|NZDCHF 0.52220 0.52232 u|NZDJPY 86.796 86.808 u|NZDUSD 0.61647 0.61659 d|USDSGD 1.29931 1.29945 d|AUDSGD 0.86979 0.86992 u|CHFSGD 1.53386 1.53399 d|EURDKK 7.46202 7.46370 d`.split('|').map(r => r.split(' '));
$('q4').innerHTML = q4.map(([s, b, a, d], i) => { const c = d === 'u' ? 'up' : 'dn';
  return `<tr class="${i < 6 ? 'y' : 'a'}"><th class="sym"><svg class="quote-icon" width="12" height="12"><use href="#q-${c}"/></svg>${s}</th><td class="${c}">${b}</td><td class="${c}">${a}</td></tr>`; }).join('');
const q5 = `EURUSD d 1.108... d 1.108... d 0.11% s|USDJPY u 140.7... u 140.7... u -0.71% y|USDCAD u 1.359... u 1.359... u 0.07% y|AUDUSD d 0.669... d 0.669... d -0.43% y|GBPUSD d 1.311... d 1.311... d -0.06% y|USDCHF u 0.847... u 0.847... u -0.47% y|GBPJPY d 184.6... u 184.6... d -0.77% g|AUDNZD d 1.085... d 1.085... d -0.13% g|NZDUSD d 0.616... d 0.616... d -0.29% g|AUDCAD u 0.909... d 0.909... u -0.34% g|AUDCHF u 0.567... u 0.567... u -0.89% g|AUDJPY u 94.252 u 94.255 u -1.14% g|CADJPY u 103.6... u 103.6... u -0.79% g|CHFJPY d 166.2... d 166.2... d -0.24% g|EURGBP u 0.845... d 0.845... u 0.17% g|EURAUD d 1.656... d 1.656... d 0.54% g|EURCHF d 0.939... d 0.939... u -0.36% g|EURJPY d 156.1... u 156.1... d -0.60% g|EURNZD d 1.798... d 1.798... u 0.41% g|EURCAD d 1.506... d 1.506... d 0.19% g|GBPCHF d 1.111... u 1.111... d -0.52% g|GBPAUD d 1.959... d 1.959... d 0.37% g|GBPCAD d 1.782... d 1.782... u 0.02% g|GBPNZD d 2.127... d 2.127... d 0.24% g|NZDJPY u 86.802 u 86.805 u -0.99% g|XAUUSD u 2566.... u 2566.... u 0.30% o`.split('|').map(r => r.split(' '));
const cl = d => d === 'u' ? 'up' : 'dn';
$('q5').innerHTML = q5.map(([s, d, b, bc, a, ac, p, row]) =>
  `<tr class="${row}"><th class="sym"><svg class="quote-icon" width="9" height="9"><use href="#r-${cl(d)}"/></svg>${s}</th><td class="${cl(bc)}">${b}</td><td class="${cl(ac)}">${a}</td><td class="${p[0] === '-' ? 'dn' : 'up'}">${p}</td></tr>`).join('');

/* ---- expert advisor comment ---- */
const eq = '='.repeat(26);
const comment = (e, l, o, p) => ['  ' + eq, '  Personal EA FULL Hedge v1.1 2023-12-12', eq, '  Time of Broker:2024.09.13 14:30:05', '  Grid Size : 3 Pips', '  TakeProfit: 30 Pips', '  Lot Mode : 2', '  Exponent Factor: 1.3 pips', '  Daily Target: 50', '  InpMaxSpread: 24 pips', eq,
  '  Equity:       ' + e, '  Last Lot : | ' + l, '  Orders Opens :   ' + o, '  Profit/Loss: ' + p, ' ' + eq, ' EquityCautionFilter : false', ' TotalEquityRiskCaution : 20.00 %', ' EquityStopFilter : true', ' TotalEquityRiskStop : 60.00 %', ' NewsFilter : true', ' TimeFilter : true', ' ' + eq]
  .map(t => `<div>${t}</div>`).join('');
$('ea4').innerHTML = comment('10029.56', 'A : 0.01 | B : 0.00', '1 | A : 1 | B : 0', '-1.10 | A : -1.10 | B : 0.00');
$('ea5').innerHTML = comment('4119.79', 'A : 0.00 | B : 0.00', '0 | A : 0 | B : 0', '0.00 | A : 0.00 | B : 0.00');

/* ---- axes ---- */
let h = ''; for (let p = 111030; p >= 110055; p -= 65) h += `<span>${(p / 1e5).toFixed(5)}</span>`;
$('ax4').innerHTML = h; h = '';
for (let p = 111010; p >= 109975; p -= 45) h += p === 110875 ? '<span class="now">1.10872</span>' : `<span>${(p / 1e5).toFixed(5)}</span>`;
$('ax5').innerHTML = h;
const times = (id, list, step) => $(id).innerHTML = list.map(t => `<span style="width:${step}%">${t}</span>`).join('');
times('tm4', ['12 Sep 2024','12 Sep 08:00','12 Sep 14:00','12 Sep 20:00','13 Sep 02:00','13 Sep 08:00','13 Sep 14:00'], 6 / 42.5 * 100);
times('tm5', ['12 Sep 2024','12 Sep 11:00','12 Sep 19:00','13 Sep 03:00','13 Sep 11:00'], 8 / 40.7 * 100);

/* ---- candles: high, body top, body bottom, low, filled ---- */
const STEP = 14.4;
function candles(x0, data) {
  return data.map(([hi, t, b, lo, f], i) => { const x = Math.round(x0 + i * STEP) + .5;
    return `<path d="M${x} ${hi}V${t}M${x} ${b}V${lo}" stroke="#46b446"/><rect x="${x - 4.5}" y="${t + .5}" width="9" height="${Math.max(b - t - 1, .5)}" fill="${f ? '#fff' : '#000'}" stroke="#46b446"/>`; }).join('');
}
const vline = (x, y1, y2, c, d) => `<path d="M${x} ${y1}V${y2}" stroke="${c}" stroke-dasharray="${d}"/>`;
const hline = (y, x1, x2, c, w, d) => `<path d="M${x1} ${y}H${x2}" stroke="${c}" stroke-width="${w}" stroke-dasharray="${d || 'none'}"/>`;

$('c4').innerHTML = vline(438.5, 114, 855, '#a83030', '3 2') + vline(510.5, 114, 855, '#a83030', '3 2') + vline(567.5, 114, 855, '#fff', '3 2')
  + hline(250.5, 250, 806, '#9a9a9a', 1)
  + [531.5, 536.5, 546.5, 551.5].map(y => hline(y, 250, 806, '#4a9a4a', 1, '8 4 2 4')).join('')
  + candles(250, [[782,787,801,801,1],[790,802,827,833,1],[783,794,827,829,0],[786,794,805,820,1],[774,778,806,806,0],[754,758,777,778,0],[717,717,759,766,0],[704,719,816,820,1],[762,814,820,833,1],[718,764,821,837,0],[731,763,772,783,1],[706,718,771,771,0],[708,719,777,783,1],[640,695,777,809,0],[582,609,695,699,0],[537,589,612,662,0],[569,587,588,655,0],[531,545,588,610,0],[467,471,544,570,0],[428,438,471,508,0],[360,370,438,443,0],[335,340,372,384,0],[343,344,348,392,1],[330,346,361,372,1],[307,308,360,360,0],[254,267,312,319,0],[240,246,289,299,1],[229,252,289,307,0],[228,251,253,272,0],[241,251,269,273,1],[256,270,282,289,1],[267,282,309,340,1],[200,211,310,351,0],[201,209,211,258,0],[150,210,215,243,1],[175,215,225,253,1],[207,225,251,251,1]])
  + hline(174.5, 250, 806, '#0000c0', 3);
const vol = [0,831,841,844,845,837,829,816,821,826,826,827,781,790,798,814,823,815,813,821,832,845,847,838,830,828,832,836,834,832,827,813,816,814,818,826];
$('c5').innerHTML = vline(1314.5, 478, 855, '#b83030', '4 2') + vline(1314.5, 126, 163, '#b83030', '4 2') + vline(1386.5, 126, 855, '#b83030', '4 2') + vline(1444.5, 126, 855, '#ccc', '3 3')
  + hline(230.5, 1141, 1664, '#778899', 1)
  + candles(1141, [[740,740,764,764,1],[723,733,764,765,0],[725,733,744,757,1],[715,718,744,744,0],[695,699,718,718,0],[662,662,700,708,0],[649,663,753,757,1],[703,753,757,769,1],[662,704,757,772,0],[675,706,712,723,1],[652,662,712,712,0],[654,662,717,723,1],[592,642,717,745,0],[537,561,643,644,0],[496,543,563,611,0],[525,542,544,605,0],[490,502,542,563,0],[432,434,502,527,0],[394,405,434,469,0],[333,341,405,411,0],[311,314,341,354,0],[317,318,321,366,1],[305,321,332,343,1],[283,284,332,332,0],[229,231,285,295,0],[218,231,267,276,1],[212,233,267,283,0],[231,233,234,251,0],[232,232,249,252,1],[236,248,260,268,1],[247,260,286,314,1],[187,195,286,324,0],[185,193,195,238,0],[140,193,198,224,1],[162,199,210,233,1],[191,208,231,233,1]])
  + vol.map((y, i) => y ? `<path d="M${Math.round(1141.6 + i * STEP)} ${y}V855" stroke="#5aa45a" stroke-width="2"/>` : '').join('');
</script>
</body>
</html>
